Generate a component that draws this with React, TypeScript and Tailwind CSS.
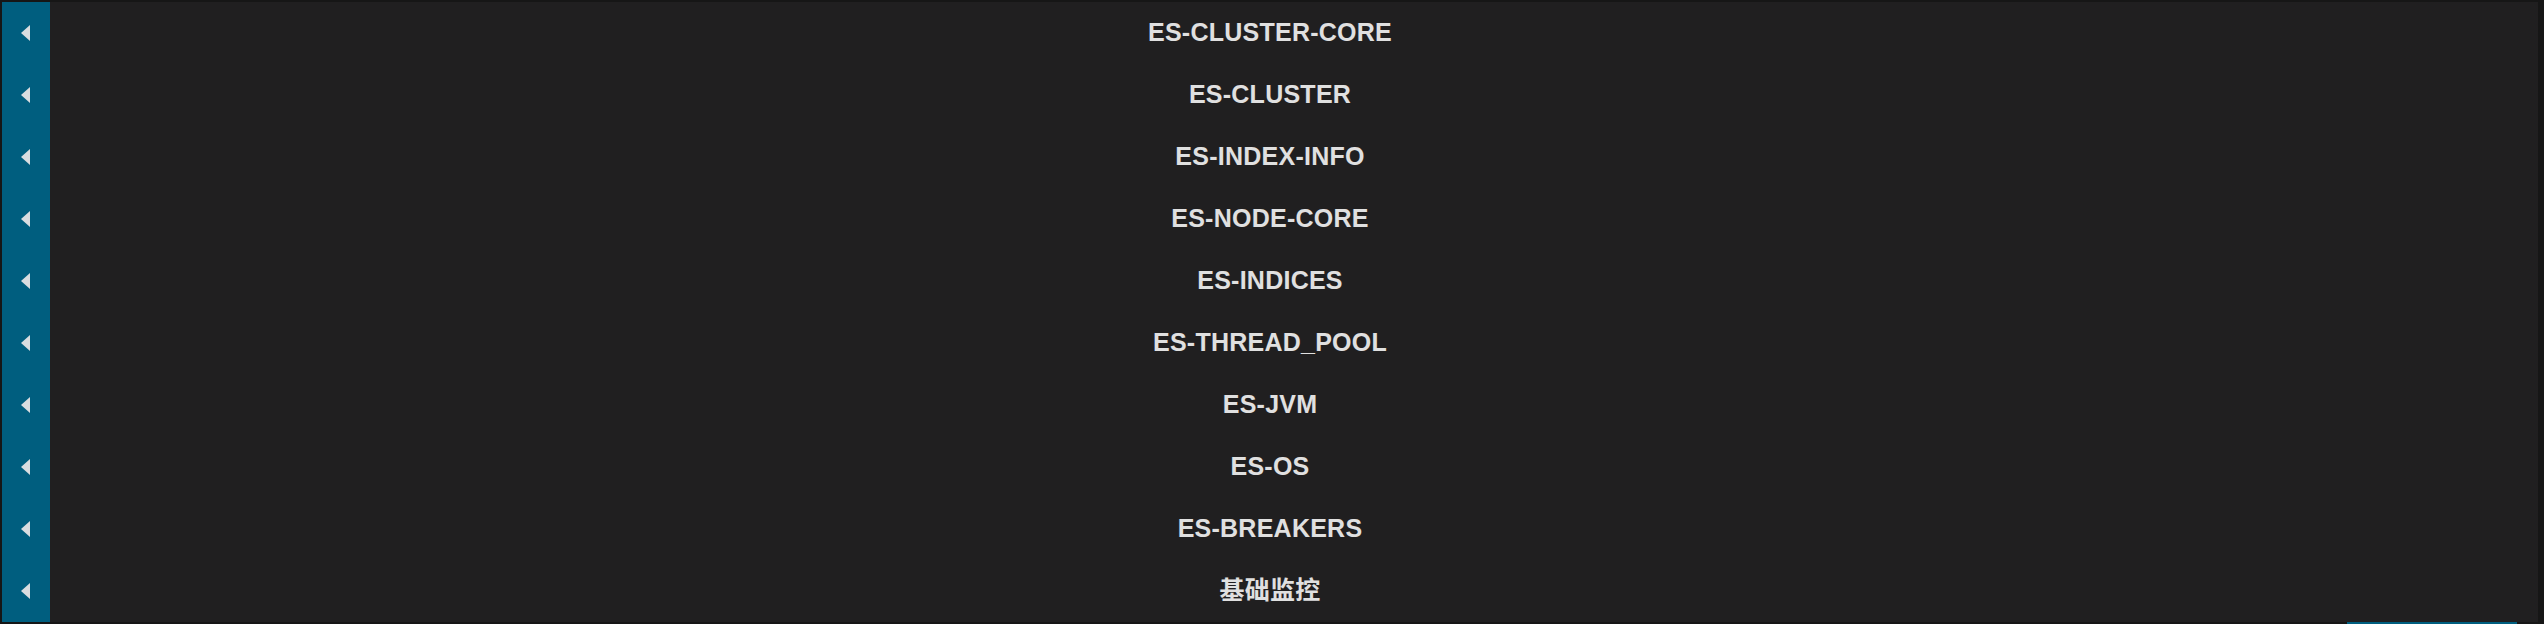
import React from "react";

const GROUPS = [
  "ES-CLUSTER-CORE",
  "ES-CLUSTER",
  "ES-INDEX-INFO",
  "ES-NODE-CORE",
  "ES-INDICES",
  "ES-THREAD_POOL",
  "ES-JVM",
  "ES-OS",
  "ES-BREAKERS",
  "基础监控",
];

function CaretLeft() {
  return (
    <svg width="9" height="16" viewBox="0 0 9 16" className="block">
      <polygon points="9,0 9,16 0,8" fill="#d9dde0" />
    </svg>
  );
}

export default function App() {
  return (
    <div className="w-[2544px] h-[624px] bg-[#161616] flex flex-col">
      <div className="flex-1 pt-[2px] pl-[2px] pr-[6px]">
        <div className="h-full flex flex-col bg-[#201f20]">
          {GROUPS.map((name) => (
            <div key={name} className="h-[62px] flex items-stretch">
              {/* collapse toggle */}
              <div className="w-[48px] shrink-0 bg-[#005e7f] flex items-center justify-center pr-[1px]">
                <CaretLeft />
              </div>
              <div
                className="flex-1 flex items-center justify-center pr-[48px] text-[25px] font-bold tracking-[0.25px] text-[#e0e0e0]"
                style={{ fontFamily: '"Liberation Sans", "Noto Sans CJK SC", sans-serif' }}
              >
                {name}
              </div>
            </div>
          ))}
        </div>
      </div>
      <div className="h-[2px] flex justify-end pr-[27px]">
        <div className="w-[170px] bg-[#005e7f]" />
      </div>
    </div>
  );
}
